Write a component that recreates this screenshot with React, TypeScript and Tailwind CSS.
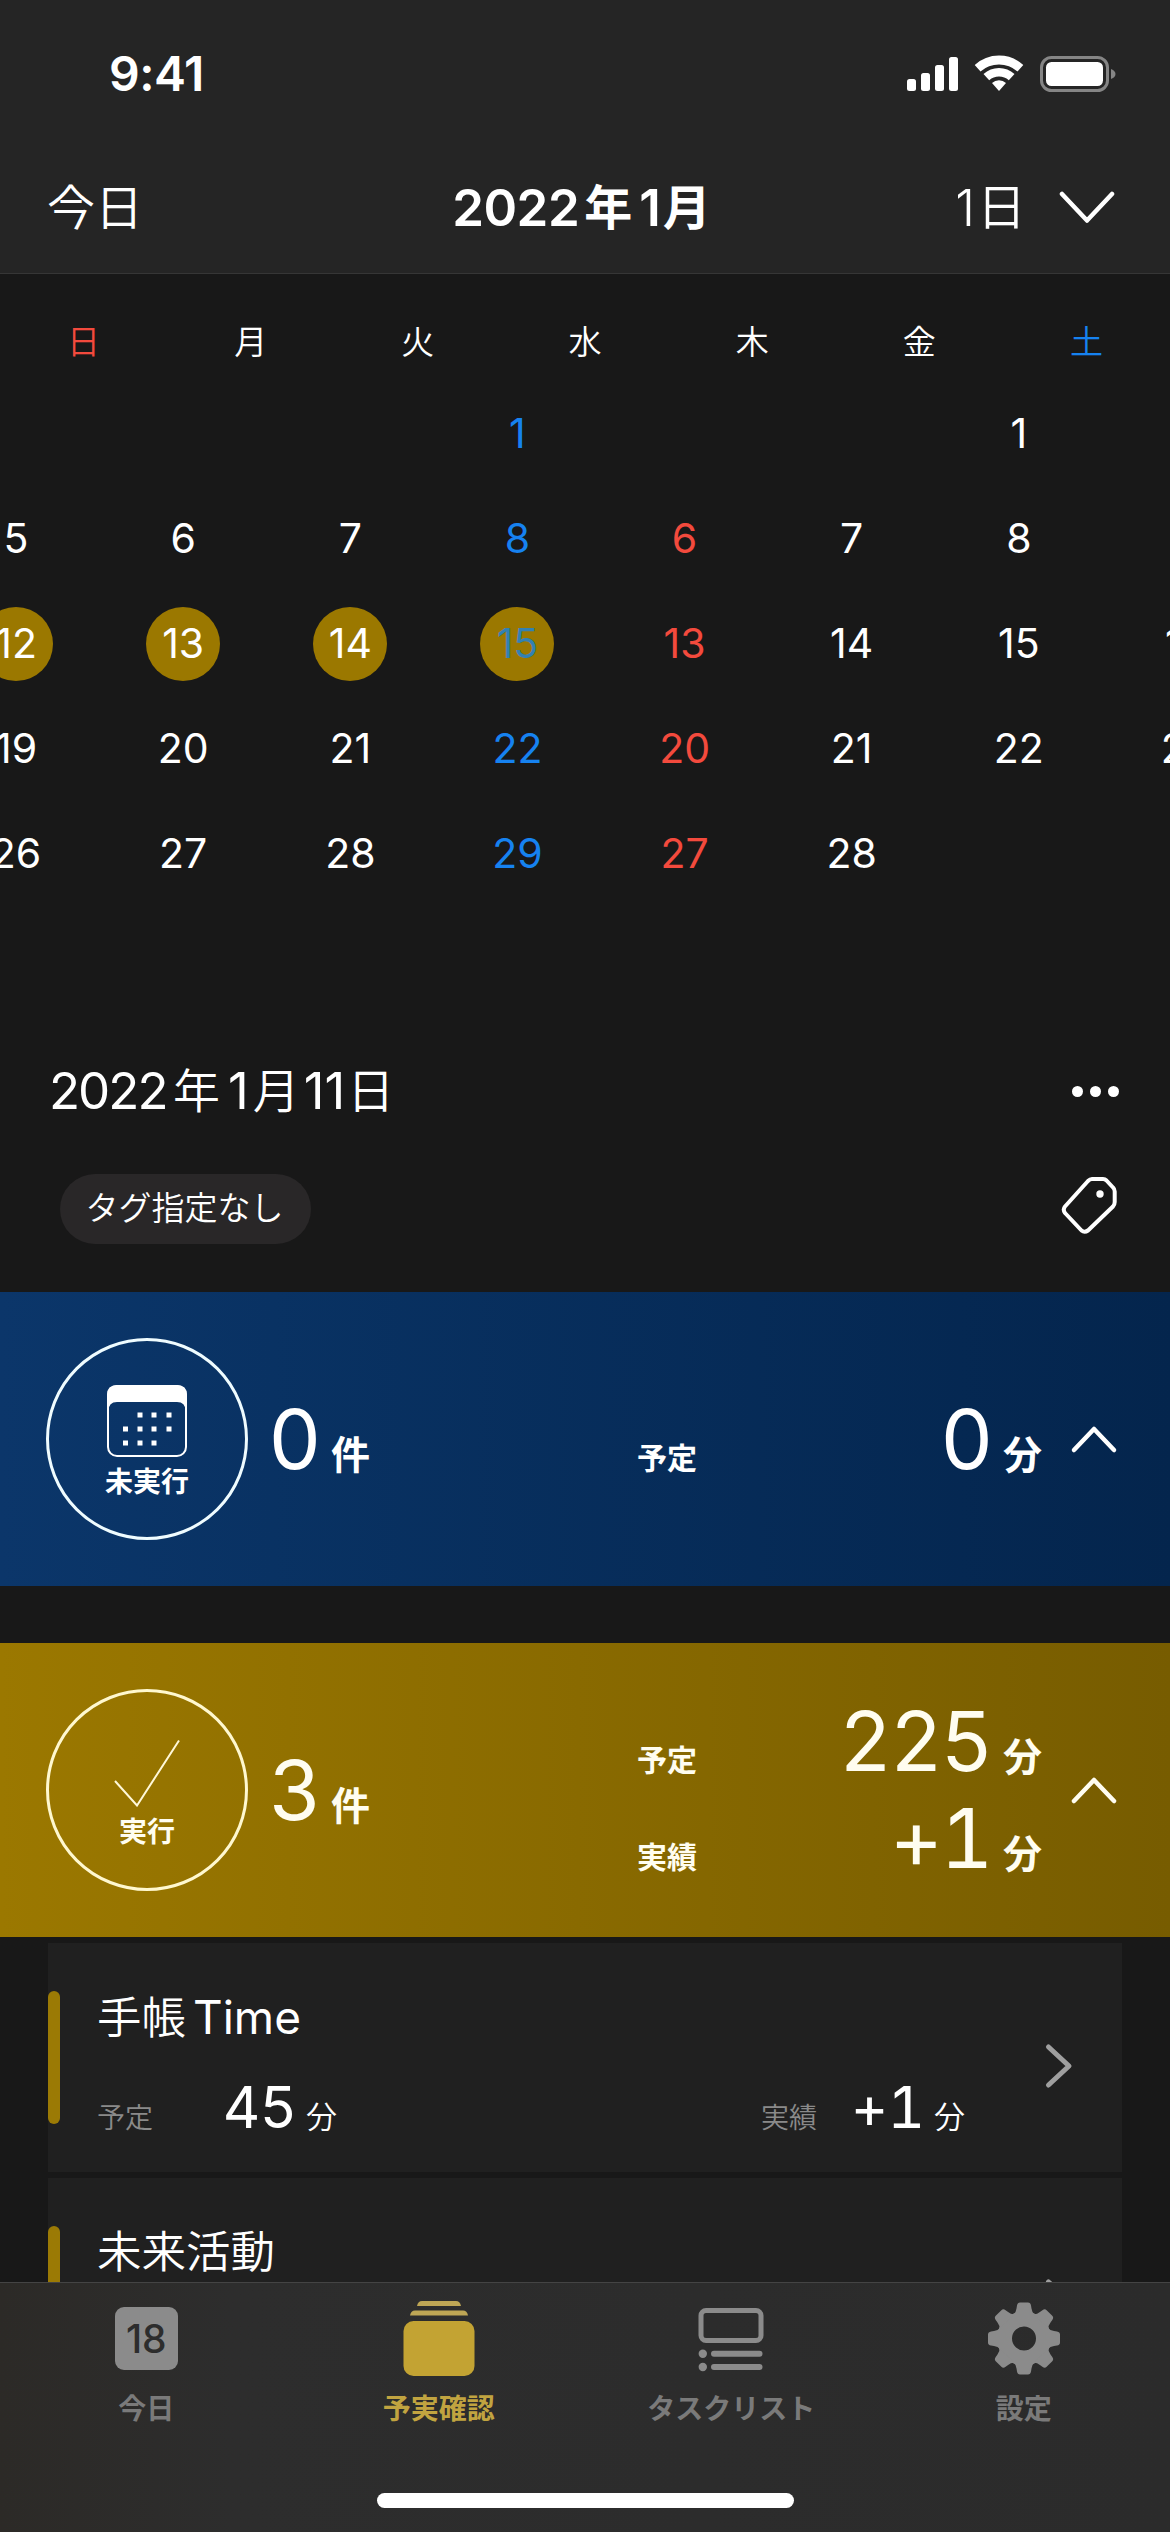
import React from 'react';
import clsx from 'clsx';

type DayTone = 'normal' | 'sat' | 'sun';

interface Day {
  n: number | null;
  tone?: DayTone;
  marked?: boolean;
}

const weekdays = [
  { label: '日', color: 'text-[#f34a3d]' },
  { label: '月', color: 'text-white' },
  { label: '火', color: 'text-white' },
  { label: '水', color: 'text-white' },
  { label: '木', color: 'text-white' },
  { label: '金', color: 'text-white' },
  { label: '土', color: 'text-[#1682f0]' },
];

const sat: DayTone = 'sat';
const sun: DayTone = 'sun';

const weeks: Day[][] = [
  [{ n: null }, { n: null }, { n: null }, { n: 1, tone: sat }, { n: null }, { n: null }, { n: 1 }, { n: null }],
  [{ n: 5 }, { n: 6 }, { n: 7 }, { n: 8, tone: sat }, { n: 6, tone: sun }, { n: 7 }, { n: 8 }, { n: null }],
  [
    { n: 12, marked: true },
    { n: 13, marked: true },
    { n: 14, marked: true },
    { n: 15, tone: sat, marked: true },
    { n: 13, tone: sun },
    { n: 14 },
    { n: 15 },
    { n: 16 },
  ],
  [{ n: 19 }, { n: 20 }, { n: 21 }, { n: 22, tone: sat }, { n: 20, tone: sun }, { n: 21 }, { n: 22 }, { n: 23 }],
  [{ n: 26 }, { n: 27 }, { n: 28 }, { n: 29, tone: sat }, { n: 27, tone: sun }, { n: 28 }, { n: null }, { n: null }],
];

const StatusBar = () => (
  <div className="flex h-[148px] items-center justify-between pl-[109px] pr-[54px]">
    <span className="text-[48px] font-semibold leading-[60px] tracking-[-0.5px]">9:41</span>
    <svg width="209" height="40" viewBox="0 0 209 40" fill="#fff">
      <rect x="0" y="25" width="9" height="12" rx="2.5" />
      <rect x="14" y="19" width="9" height="18" rx="2.5" />
      <rect x="28" y="11" width="9" height="26" rx="2.5" />
      <rect x="42" y="3" width="9" height="34" rx="2.5" />
      <path d="M92 1.500a36 36 0 0 1 24.300 9.500l-5.800 6.600a27.500 27.500 0 0 0-37 0L67.700 11A36 36 0 0 1 92 1.500z" />
      <path d="M92 14a23.500 23.500 0 0 1 15.500 6l-5.700 6.200a15 15 0 0 0-19.600 0L76.500 20A23.500 23.500 0 0 1 92 14z" />
      <path d="M92 26.300a11 11 0 0 1 7 2.600L92 37l-7-8.100a11 11 0 0 1 7-2.600z" />
      <rect x="134.500" y="3.500" width="66" height="33" rx="10" fill="none" stroke="#858585" strokeWidth="3" />
      <rect x="139" y="8" width="57" height="24" rx="5.500" />
      <path d="M204 15c3 1 4.500 3 4.500 5s-1.500 4-4.500 5z" fill="#858585" />
    </svg>
  </div>
);

const Header = () => (
  <header className="border-b border-[#363636] bg-[#252525] pb-[6px]">
    <StatusBar />
    <div className="grid h-[119px] grid-cols-[1fr_auto_1fr] items-center pl-[47px] pr-[54px] text-[48px] leading-[60px]">
      <span className="font-[350]">今日</span>
      <h1 className="flex items-center text-[51px] font-semibold">
        <span className="tracking-[-0.5px]">2022</span>
        <span className="ml-[5px] text-[48px] font-bold">年</span>
        <span className="ml-[7px]">1</span>
        <span className="ml-[2px] text-[48px] font-bold">月</span>
      </h1>
      <div className="flex items-center justify-end">
        <span className="text-[50px] font-[350]">1</span>
        <span className="ml-[2px] text-[49px] font-[350]">日</span>
        <svg className="ml-[32px]" width="58" height="34" viewBox="0 0 58 34" fill="none" stroke="#fff" strokeWidth="4.500" strokeLinecap="round" strokeLinejoin="round">
          <path d="M4 3 29 29.500 54 3" />
        </svg>
      </div>
    </div>
  </header>
);

const Calendar = () => (
  <section className="overflow-hidden">
    <div className="grid h-[107px] grid-cols-7 items-center pt-[29px] text-center text-[33px] font-[350] leading-[40px]">
      {weekdays.map((d) => (
        <span key={d.label} className={d.color}>
          {d.label}
        </span>
      ))}
    </div>
    {/* the strip is caught mid-scroll, so it starts left of the screen edge */}
    <div className="-ml-[67.500px] grid w-[1337px] grid-cols-8">
      {weeks.flat().map((day, i) => (
        <div key={i} className="flex h-[105px] items-center justify-center">
          <span
            className={clsx(
              'flex size-[74px] items-center justify-center rounded-full text-[41px]',
              day.marked && 'bg-[#9b7800]',
              day.tone === 'sat' && (day.marked ? 'text-[#3381b2]' : 'text-[#1682f0]'),
              day.tone === 'sun' && 'text-[#f34a3d]',
            )}
          >
            {day.n}
          </span>
        </div>
      ))}
    </div>
  </section>
);

const DayHeading = () => (
  <section className="mb-[48px] mt-[145px]">
    <div className="flex h-[80px] items-center justify-between pl-[49px] pr-[51px]">
      <h2 className="flex items-center text-[51px] leading-[60px]">
        <span className="w-[119px] tracking-[-2px]">2022</span>
        <span className="ml-[5px] text-[47px] font-[350]">年</span>
        <span className="ml-[8px]">1</span>
        <span className="ml-[4px] text-[47px] font-[350]">月</span>
        <span className="ml-[4px]">11</span>
        <span className="ml-[2px] text-[47px] font-[350]">日</span>
      </h2>
      <div className="flex gap-[7px]">
        <span className="size-[11px] rounded-full bg-white" />
        <span className="size-[11px] rounded-full bg-white" />
        <span className="size-[11px] rounded-full bg-white" />
      </div>
    </div>
    <div className="mt-[43px] flex h-[70px] items-center justify-between pl-[60px] pr-[50px]">
      <span className="flex h-[70px] w-[251px] items-center justify-center rounded-full bg-[#292728] pr-[2px] text-[33px] font-[350]">
        タグ指定なし
      </span>
      <svg className="mb-[8px]" width="60" height="60" viewBox="0 0 60 60" fill="none" stroke="#fff" strokeWidth="4" strokeLinejoin="round">
        <path d="M32 4H43Q45 4 46.500 5.500L53 12.500Q54.700 14 54.700 16.500V27Q54.700 29.500 53 31.500L28 55.500Q24.500 58 21.500 55.500L5 38Q2.500 34.500 5 31.500L28 6Q30 4 32 4z" />
        <circle cx="40" cy="19" r="3.700" fill="#fff" stroke="none" />
      </svg>
    </div>
  </section>
);

const CalendarIcon = () => (
  <svg width="80" height="72" viewBox="0 0 80 72">
    <rect x="1" y="1" width="78" height="70" rx="9" fill="none" stroke="#fff" strokeWidth="2" />
    <path d="M0 26V10Q0 0 10 0H70Q80 0 80 10V26H78.500Q78.500 17 70 17H10Q1.500 17 1.500 26z" fill="#fff" />
    {[[33, 30], [47, 30], [62, 30], [18.500, 44], [33, 44], [47, 44], [62, 44], [18.500, 58], [33, 58], [47, 58]].map(([x, y]) => (
      <rect key={`${x}-${y}`} x={x - 2.500} y={y - 2.500} width="5" height="5" fill="#fff" />
    ))}
  </svg>
);

const CheckIcon = () => (
  <svg width="68" height="68" viewBox="0 0 68 68" fill="none" stroke="#fff8d8" strokeWidth="2">
    <path d="M2 42 24 66.500 66 1.500" />
  </svg>
);

interface SummaryBandProps {
  label: string;
  icon: React.ReactNode;
  count: number;
  rows: { label: string; value: string }[];
  className: string;
  badgeClassName: string;
}

const SummaryBand: React.FC<SummaryBandProps> = ({ label, icon, count, rows, className, badgeClassName }) => (
  <div className={clsx('flex h-[294px] shrink-0 items-center pl-[46px]', className)}>
    <div className={clsx('flex size-[202px] flex-col items-center rounded-full border-3', badgeClassName)}>
      {icon}
      <span className="text-[28px] font-bold leading-[32px]">{label}</span>
    </div>
    <div className="ml-[21px] flex w-[368px] items-baseline">
      <span className="w-[62px] text-[82px] leading-[97px]">{count}</span>
      <span className="text-[39px] font-bold leading-[40px]">件</span>
    </div>
    <div className="flex w-[405px] flex-col">
      {rows.map((row) => (
        <div key={row.label} className="flex items-baseline">
          <span className="text-[30px] font-bold leading-[40px]">{row.label}</span>
          <span className="ml-auto text-[82px] leading-[97px] tracking-[-2.500px] tabular-nums">{row.value}</span>
          <span className="ml-[12px] text-[39px] font-bold leading-[40px]">分</span>
        </div>
      ))}
    </div>
    <svg className="ml-[28px]" width="48" height="30" viewBox="0 0 48 30" fill="none" stroke="currentColor" strokeWidth="4.500" strokeLinecap="round" strokeLinejoin="round">
      <path d="M4 26 24 5 44 26" />
    </svg>
  </div>
);

const Value = ({ label, value, className }: { label: string; value: string; className?: string }) => (
  <div className={clsx('flex items-baseline', className)}>
    <span className="text-[28px] font-[350] leading-[40px] text-[#8a8a8a]">{label}</span>
    <span className="ml-auto text-[58px] leading-[60px] tracking-[-1px] tabular-nums">{value}</span>
    <span className="ml-[10px] text-[31px] font-[350] leading-[40px]">分</span>
  </div>
);

interface TaskCardProps {
  title: React.ReactNode;
  plan?: string;
  actual?: string;
}

const TaskCard = ({ title, plan, actual }: TaskCardProps) => (
  <div className="flex h-[229px] shrink-0 items-start bg-[#202020]">
    <div className="mt-[48px] h-[133px] w-[12px] rounded-full bg-[#9b7a05]" />
    <div className="ml-[37px] flex w-[900px] flex-col pt-[52px]">
      <h3 className="text-[44.500px] font-[350] leading-[44px]">{title}</h3>
      <div className="mt-[37px] flex justify-between">
        {plan && <Value label="予定" value={plan} className="w-[240px]" />}
        {actual && <Value label="実績" value={actual} className="mr-[32px] w-[204px]" />}
      </div>
    </div>
    <svg className="ml-[46px] mt-[99px]" width="32" height="48" viewBox="0 0 32 48" fill="none" stroke="#9f9f9f" strokeWidth="5" strokeLinecap="round" strokeLinejoin="round">
      <path d="M5.500 5 26 24 5.500 43" />
    </svg>
  </div>
);

const TodayIcon = () => (
  <span className="flex size-[63px] items-center justify-center rounded-[9px] bg-[#8b8b8b] text-[39px] font-medium leading-none text-[#2d2d2d]">
    18
  </span>
);

const ReviewIcon = () => (
  <svg width="72" height="77" viewBox="0 0 72 77" fill="#c3a333">
    <path d="M14 6Q15 1 19 1H53Q57 1 58 6z" fill="#bea655" />
    <path d="M7 15.500Q8 10.500 12 10.500H60Q64 10.500 65 15.500z" fill="#bea655" />
    <rect x="0.500" y="21" width="71" height="55" rx="10" />
  </svg>
);

const ListIcon = () => (
  <svg width="66" height="77" viewBox="0 0 66 77" fill="#8b8b8b">
    <rect x="3" y="10.500" width="60" height="30" rx="5" fill="none" stroke="#8b8b8b" strokeWidth="5" />
    <circle cx="4.800" cy="53.700" r="4.200" />
    <circle cx="4.800" cy="67" r="4.200" />
    <rect x="13" y="50.700" width="51.500" height="6" rx="3" />
    <rect x="13" y="64" width="51.500" height="6" rx="3" />
  </svg>
);

const GearIcon = () => (
  <svg width="72" height="77" viewBox="-36 -38.500 72 77" fill="#8b8b8b">
    <path fillRule="evenodd" d="M-27 0a27 27 0 1 0 54 0a27 27 0 1 0-54 0zM-12 0a12 12 0 1 0 24 0a12 12 0 1 0-24 0z" />
    {[0, 45, 90, 135, 180, 225, 270, 315].map((deg) => (
      <path key={deg} transform={`rotate(${deg})`} d="M-10.500-24Q-8-26-7.500-30L-7-33Q-6.500-36-4-36H4Q6.500-36 7-33L7.500-30Q8-26 10.500-24z" />
    ))}
  </svg>
);

const tabs = [
  { label: '今日', icon: <TodayIcon /> },
  { label: '予実確認', icon: <ReviewIcon />, active: true },
  { label: 'タスクリスト', icon: <ListIcon /> },
  { label: '設定', icon: <GearIcon /> },
];

const TabBar = () => (
  <nav className="flex h-[250px] shrink-0 flex-col items-center border-t border-[#444] bg-linear-to-r from-[#2c2a27] via-[#2d2d2d] via-20% to-[#2b2b2b]">
    <div className="grid w-full grid-cols-4 pt-[17px]">
      {tabs.map((tab) => (
        <div key={tab.label} className="flex flex-col items-center">
          <div className="flex h-[77px] items-center">{tab.icon}</div>
          <span
            className={clsx(
              'mt-[12px] text-[28px] font-bold leading-[40px]',
              tab.active ? 'text-[#c1a440]' : 'text-[#7a7a7a]',
            )}
          >
            {tab.label}
          </span>
        </div>
      ))}
    </div>
    <div className="mt-[64px] h-[15px] w-[417px] rounded-full bg-white" />
  </nav>
);

export default function App() {
  return (
    <div
      lang="ja"
      className="flex h-[2532px] w-[1170px] flex-col overflow-hidden bg-[#181818] font-['Inter','Noto_Sans_CJK_JP',sans-serif] text-white"
    >
      <Header />
      <Calendar />
      <DayHeading />
      <SummaryBand
        label="未実行"
        icon={<div className="mb-[9px] mt-[44px]"><CalendarIcon /></div>}
        count={0}
        rows={[{ label: '予定', value: '0' }]}
        className="bg-linear-to-r from-[#0b366a] to-[#04254d]"
        badgeClassName="border-[#effcff]"
      />
      <SummaryBand
        label="実行"
        icon={<div className="mb-[9px] mt-[47px]"><CheckIcon /></div>}
        count={3}
        rows={[
          { label: '予定', value: '225' },
          { label: '実績', value: '+1' },
        ]}
        className="mt-[57px] bg-linear-to-r from-[#9b7800] to-[#775c00] text-[#fffdf0]"
        badgeClassName="border-[#fff8cf]"
      />
      <main className="flex min-h-0 flex-1 flex-col gap-[6px] overflow-hidden px-[48px] pt-[6px]">
        <TaskCard
          title={<>手帳<span className="ml-[7px] text-[46px] font-normal">Time</span></>}
          plan="45"
          actual="+1"
        />
        <TaskCard title="未来活動" />
      </main>
      <TabBar />
    </div>
  );
}
